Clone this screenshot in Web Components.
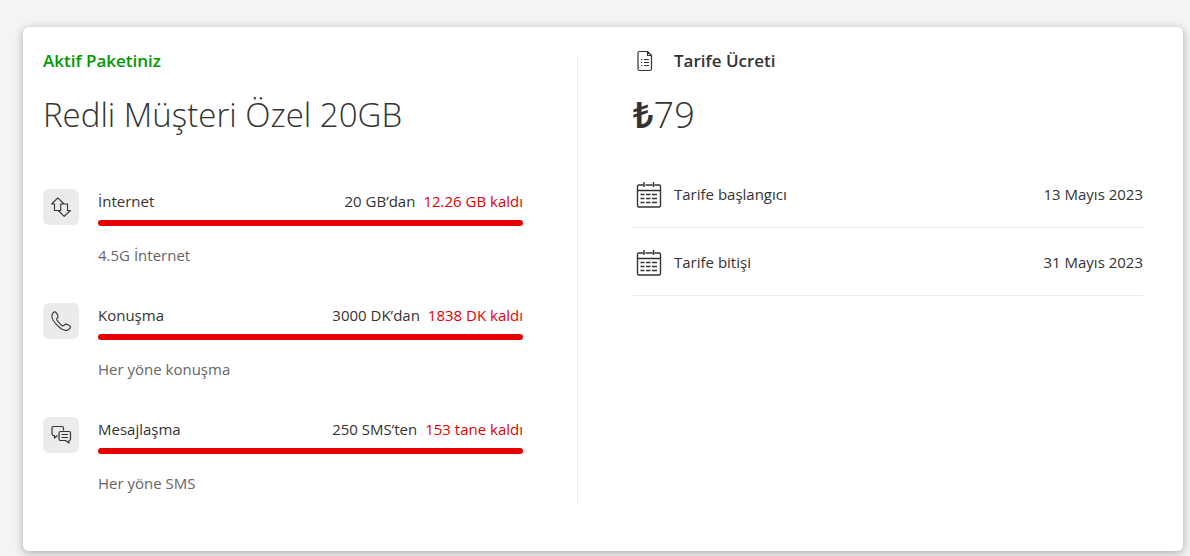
<!DOCTYPE html>
<html lang="tr">
<head>
<meta charset="utf-8">
<meta name="viewport" content="width=device-width, initial-scale=1">
<title>Aktif Paketiniz</title>
<style>
  body {
    margin: 0;
    padding: 27px 7px 5px 23px;
    background: #f4f4f4;
    color: #333;
    font: 15px/24px "Open Sans", "Noto Sans", sans-serif;
  }
</style>
</head>
<body>
<plan-card>
  <plan-section slot="main" label="Aktif Paketiniz" active>
    <span slot="title">Redli Müşteri Özel 20GB</span>
    <usage-list>
      <usage-item icon="data" name="İnternet" total="20 GB’dan" left="12.26 GB kaldı" detail="4.5G İnternet"></usage-item>
      <usage-item icon="phone" name="Konuşma" total="3000 DK’dan" left="1838 DK kaldı" detail="Her yöne konuşma"></usage-item>
      <usage-item icon="chat" name="Mesajlaşma" total="250 SMS’ten" left="153 tane kaldı" detail="Her yöne SMS"></usage-item>
    </usage-list>
  </plan-section>
  <plan-section slot="side" label="Tarife Ücreti" icon="document">
    <plan-price slot="title" currency="₺" amount="79"></plan-price>
    <date-row label="Tarife başlangıcı" value="13 Mayıs 2023"></date-row>
    <date-row label="Tarife bitişi" value="31 Mayıs 2023"></date-row>
  </plan-section>
</plan-card>

<script>
const icons = {
  data: ['0 0 20 20', 20, 20, '<path d="M9.700 13.500H3.500V7H.7L6.800.8 13 7H9.700ZM9.700 7H16.500V13.500H19.400L13.200 19.300 7.300 13.500H9.700" stroke-width="1.100"/>'],
  phone: ['0 0 20 20', 20, 20, '<path d="M1.200 3.800C.2 6 2 9.800 5.600 13.600 9.400 17.600 13.600 20 16.200 19.200 17.600 18.800 19.200 17.400 19.600 16.300 19.800 15.400 16.200 13 14.800 13.100 13.600 13.200 12.900 14.900 12 14.900 10.800 14.900 5.700 9.700 5.600 8.300 5.600 7.300 7.100 6.800 7.100 5.500 7.100 4.100 4.800.8 3.900.7 3 .7 1.600 2.500 1.200 3.800Z" stroke-width="1.100"/>'],
  chat: ['0 0 21 20', 21, 20, '<path d="M6.500 10.500 3.500 13V10.500H2.500Q1 10.500 1 9V3Q1 1.500 2.500 1.500H11Q12.500 1.500 12.500 3V5.500M9.500 6.500H18Q19.500 6.500 19.500 8V14Q19.500 15.500 18 15.500V18L14.500 15.500H9.500Q8 15.500 8 14V8Q8 6.500 9.500 6.500ZM10.500 9.500H17M10.500 12.500H17" stroke-width="1.200"/>'],
  document: ['0 0 16 22', 16, 22, '<path d="M2.500 1.500H10.500L14.500 5.500V19Q14.500 20.500 13 20.500H2.500Q1 20.500 1 19V3Q1 1.500 2.500 1.500ZM10.500 1.500V5.500H14.500" stroke-width="1.200"/><path d="M4 9.500H5.200M7 9.500H12M4 12.500H5.200M7 12.500H12M4 15.500H5.200M7 15.500H12" stroke-width="1.200"/>'],
  calendar: ['0 -1 26 28', 26, 28, '<path d="M7.500 4H2.800Q1.500 4 1.500 5.500V24.500Q1.500 26 3 26H23Q24.500 26 24.500 24.500V5.500Q24.500 4 23.200 4H18.500M9.500 4H16.500M8 1V6M17.500 1V6M1.500 9.500H24.500" stroke-width="1.400"/><path d="M4.500 13.500H8.500M10 13.500H14.500M16 13.500H21M4.500 17.500H8.500M10 17.500H14.500M16 17.500H21M4.500 21.500H8.500M10 21.500H14.500M16 21.500H21" stroke-width="1.500"/>']
};

class ShadowElement extends HTMLElement {
  connectedCallback() {
    if (!this.shadowRoot) this.attachShadow({ mode: 'open' }).innerHTML = this.view();
  }
  get(name) { return this.getAttribute(name) ?? ''; }
}

customElements.define('line-icon', class extends ShadowElement {
  view() {
    const [box, width, height, shapes] = icons[this.get('name')];
    return `<style>
      :host { display: block; flex: none; line-height: 0; }
      svg { display: block; fill: none; stroke: currentColor; stroke-linejoin: round; }
    </style>
    <svg viewBox="${box}" width="${width}" height="${height}" aria-hidden="true">${shapes}</svg>`;
  }
});

customElements.define('plan-card', class extends ShadowElement {
  view() {
    return `<style>
      :host {
        display: grid; grid-template-columns: 535fr 565fr;
        box-sizing: border-box; min-height: 524px; padding: 28px 40px 46px 20px;
        background: #fff; border-radius: 6px; box-shadow: 0 2px 10px rgba(0, 0, 0, .3);
      }
      .main { padding-right: 54px; border-right: 1px solid #ebebeb; }
      .side { padding-left: 55px; }
    </style>
    <div class="main"><slot name="main"></slot></div>
    <div class="side"><slot name="side"></slot></div>`;
  }
});

customElements.define('plan-section', class extends ShadowElement {
  view() {
    const icon = this.get('icon');
    return `<style>
      :host { display: block; }
      header { display: flex; align-items: center; height: 12px; }
      line-icon { margin: 0 21px 0 4px; }
      h2 { margin: 0; font-size: 17px; font-weight: 600; line-height: 24px; }
      :host([active]) h2 { color: #009900; }
      h1 { margin: 24px 0 21px; font-size: 33px; font-weight: 300; line-height: 48px; }
    </style>
    <header>${icon ? `<line-icon name="${icon}"></line-icon>` : ''}<h2>${this.get('label')}</h2></header>
    <h1><slot name="title"></slot></h1>
    <slot></slot>`;
  }
});

customElements.define('plan-price', class extends ShadowElement {
  view() {
    return `<style>
      :host { display: block; font-size: 36px; }
      b { font-weight: 600; }
    </style><b>${this.get('currency')}</b>${this.get('amount')}`;
  }
});

customElements.define('usage-list', class extends ShadowElement {
  view() {
    return `<style>
      :host { display: flex; flex-direction: column; gap: 36px; padding-top: 29px; }
    </style><slot></slot>`;
  }
});

customElements.define('usage-item', class extends ShadowElement {
  view() {
    return `<style>
      :host { display: flex; gap: 19px; }
      .tile {
        display: grid; place-items: center; flex: none;
        width: 36px; height: 36px; border-radius: 6px; background: #ebebeb;
      }
      .body { flex: 1; min-width: 0; }
      .line { display: flex; justify-content: space-between; }
      .left { margin-left: 8px; color: #e60000; }
      .bar { height: 6px; margin: 7px 0 17px; border-radius: 3px; background: #e60000; }
      .detail { color: #666; }
    </style>
    <div class="tile"><line-icon name="${this.get('icon')}"></line-icon></div>
    <div class="body">
      <div class="line">
        <span>${this.get('name')}</span>
        <span>${this.get('total')}<span class="left">${this.get('left')}</span></span>
      </div>
      <div class="bar"></div>
      <div class="detail">${this.get('detail')}</div>
    </div>`;
  }
});

customElements.define('date-row', class extends ShadowElement {
  view() {
    return `<style>
      :host {
        display: flex; align-items: center; box-sizing: border-box;
        height: 68px; padding-left: 3px; border-bottom: 1px solid #ebebeb;
      }
      .label { flex: 1; margin-left: 12px; }
    </style>
    <line-icon name="calendar"></line-icon>
    <span class="label">${this.get('label')}</span>
    <span>${this.get('value')}</span>`;
  }
});
</script>
</body>
</html>
